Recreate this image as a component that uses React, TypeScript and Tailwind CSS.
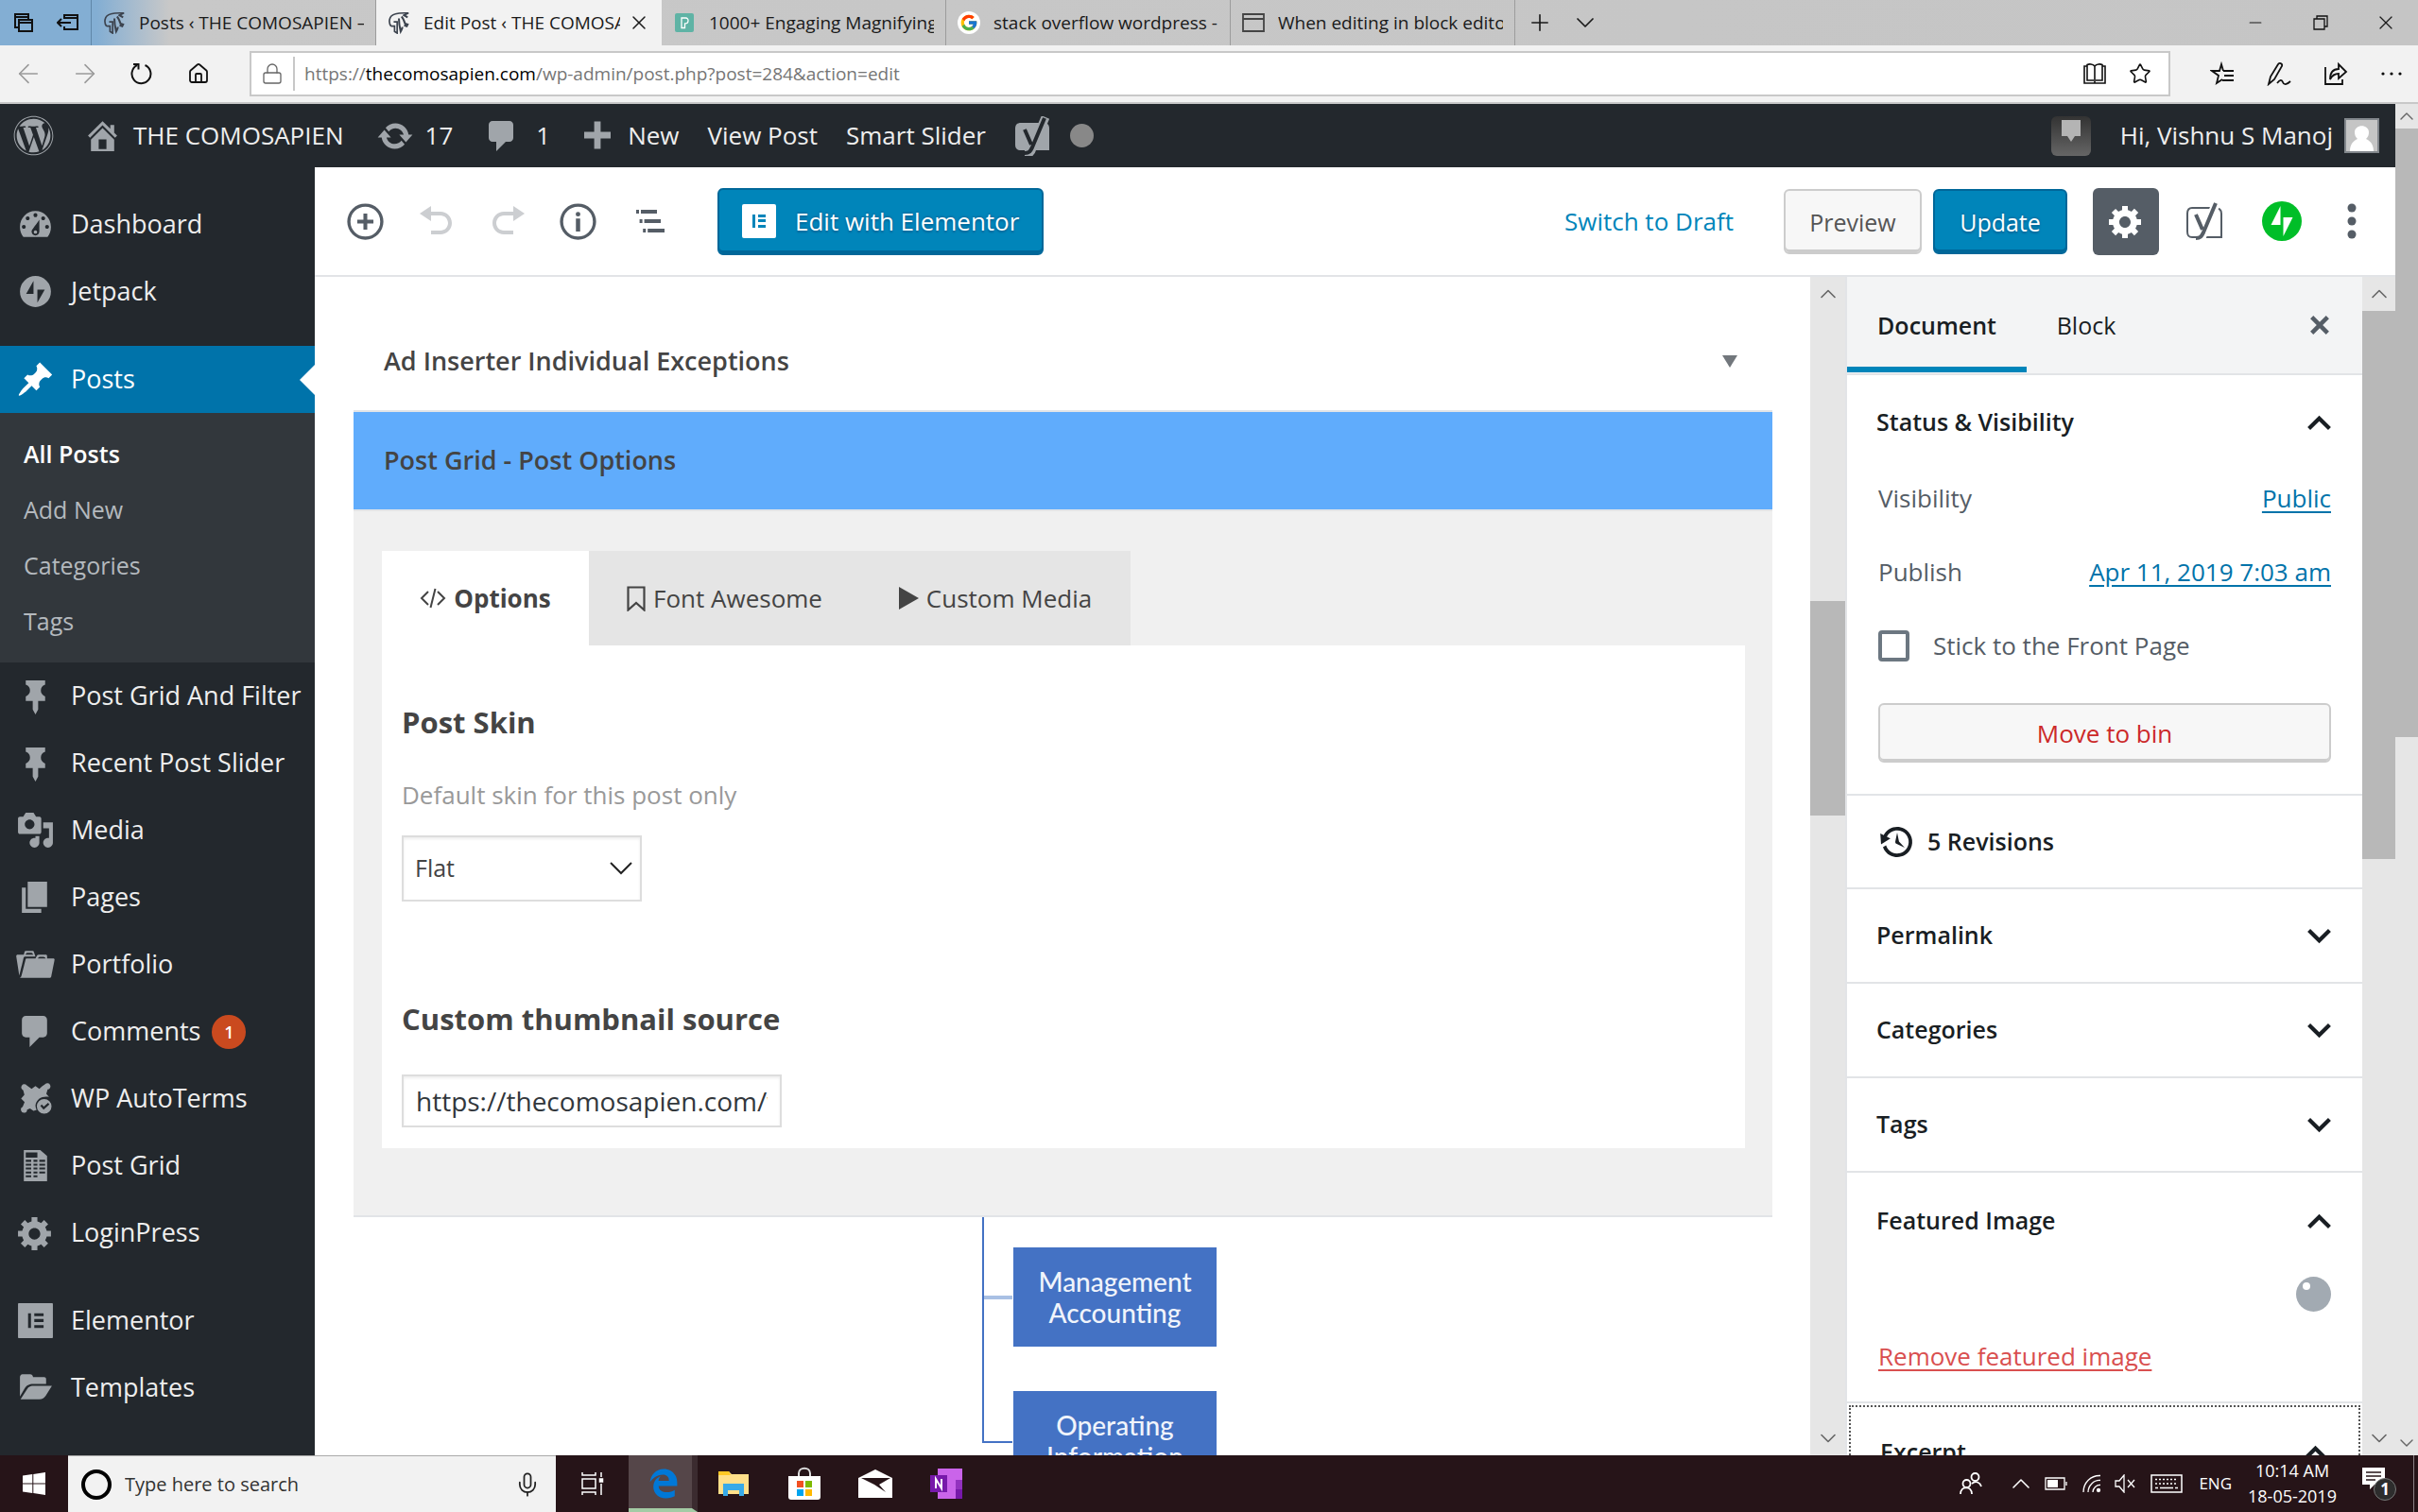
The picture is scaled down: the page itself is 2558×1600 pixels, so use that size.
import React from "react";
import {
  ArrowLeft,
  ArrowRight,
  ChevronDown,
  ChevronUp,
  House,
  Lock,
  Mic,
  Minus,
  Plus,
  Star,
  X,
} from "lucide-react";
import { FaWordpress, FaEdgeLegacy } from "react-icons/fa";
import { FcGoogle } from "react-icons/fc";

const paths = {
  post: "M10.44 3.02l1.82-1.82 6.36 6.35-1.83 1.82c-1.05-.68-2.48-.57-3.41.36l-.75.75c-.92.93-1.04 2.35-.35 3.41l-1.83 1.82-2.41-2.41-2.8 2.79c-.42.42-3.38 2.71-3.8 2.29s1.86-3.39 2.28-3.81l2.79-2.79L4.1 9.36l1.83-1.82c1.05.69 2.48.57 3.4-.36l.75-.75c.93-.92 1.05-2.35.36-3.41z",
  home: "M16 8.5l1.53 1.53-1.06 1.06L10 4.6l-6.47 6.49-1.06-1.06L10 2.5l4 4v-2h2v4zm-6-2.46l6 5.99V18H4v-5.97zM12 17v-5H8v5h4z",
  update:
    "M10.2 3.28c3.53 0 6.43 2.61 6.92 6h2.08l-3.5 4-3.5-4h2.32c-.45-1.97-2.21-3.45-4.32-3.45-1.45 0-2.73.71-3.54 1.78L4.95 5.66C6.23 4.2 8.11 3.28 10.2 3.28zm-.4 13.44c-3.52 0-6.43-2.61-6.92-6H.8l3.5-4c1.17 1.33 2.33 2.67 3.5 4H5.48c.45 1.97 2.21 3.45 4.32 3.45 1.45 0 2.73-.71 3.54-1.78l1.71 1.95c-1.28 1.46-3.15 2.38-5.25 2.38z",
  comments:
    "M5 2h9c1.1 0 2 .9 2 2v7c0 1.1-.9 2-2 2h-2l-5 5v-5H5c-1.1 0-2-.9-2-2V4c0-1.1.9-2 2-2z",
  plus: "M17 7.8v3.4h-5.3V16.800H8.300V11.200H3V7.800h5.300V2.200h3.400v5.600z",
  dashboard:
    "M3.76 16.5h12.48C17.350 15 18 13.300 18 11.300 18 6.600 14.420 3 10 3s-8 3.600-8 8.300c0 2 .65 3.700 1.760 5.200zM10 4.200c.6 0 1 .4 1 1s-.4 1-1 1-1-.4-1-1 .4-1 1-1zM6 5.800c.6 0 1 .4 1 1s-.4 1-1 1-1-.4-1-1 .4-1 1-1zm8 0c.6 0 1 .4 1 1s-.4 1-1 1-1-.4-1-1 .4-1 1-1zM12 7.500v6.200c0 1.100-.9 2-2 2s-2-.9-2-2 1.500-2.400 4-6.200zM4 10.200c.6 0 1 .4 1 1s-.4 1-1 1-1-.4-1-1 .4-1 1-1zm12 0c.6 0 1 .4 1 1s-.4 1-1 1-1-.4-1-1 .4-1 1-1zM10 13a.9.9 0 1 0 0 1.800.9.9 0 1 0 0-1.800z",
  jetpack:
    "M10 2a8 8 0 1 0 0 16 8 8 0 1 0 0-16zM9 4.500V11.200H5.200zM11 9h3.800L11 15.700z",
  pin: "M5 2h10v2.200c-1.600.6-2.200 1.600-2.200 3s.7 2.300 2.200 3V12.500h-3.600v4.500L10 19.500 8.600 17v-4.500H5v-2.300c1.500-.7 2.200-1.600 2.200-3S6.600 4.800 5 4.200z",
  media:
    "M13 11V4c0-.55-.45-1-1-1h-1.670L9 1H5L3.670 3H2c-.55 0-1 .45-1 1v7c0 .55.45 1 1 1h10c.55 0 1-.45 1-1zM7 4.500c1.380 0 2.500 1.120 2.500 2.500S8.380 9.500 7 9.500 4.500 8.380 4.500 7 5.620 4.500 7 4.500zM14 6h5v10.500c0 1.380-1.120 2.500-2.500 2.500S14 17.880 14 16.500s1.120-2.500 2.500-2.500c.17 0 .34.02.5.05V9h-3V6zm-4 8.050V13h2v3.500c0 1.380-1.120 2.500-2.500 2.500S7 17.880 7 16.500 8.120 14 9.500 14c.17 0 .34.02.5.05z",
  page: "M6 15V2h10v13H6zm-1 1h8v2H3V5h2v11z",
  portfolio:
    "M4 5H.78c-.37 0-.74.32-.69.84l1.560 9.990S3.500 8.470 3.860 6.700c.11-.53.61-.7.98-.7H10s-.7-2.080-.77-2.310C9.110 3.250 8.890 3 8.450 3H5.140c-.36 0-.7.23-.8.64C4.250 4.040 4 5 4 5zm4.880 0h-4s.42-1 .87-1h2.130c.48 0 1 1 1 1zM2.670 16.250c-.31.47-.76.75-1.260.75h15.730c.54 0 .92-.31 1.030-.83.44-2.190 1.680-8.440 1.680-8.440.07-.5-.3-.73-.62-.73H16V5.530c0-.16-.26-.53-.66-.53h-3.760c-.52 0-.87.58-.87.58L10 7H5.590c-.32 0-.63.19-.69.5 0 0-1.590 6.700-2.230 8.750zM15.340 7H11.300s.34-.85.94-.85h1.900c.6 0 1.200.85 1.200.85z",
  autoterms:
    "M10 3.500l2 1.500 1.300-1.200L15 2.600a1.600 1.600 0 1 1 1.300 2.700L15.600 7.500 17 9.200c-3.500-.6-6.500 1-7 4.300.1 1 .3 1.700.6 2.400L9 16.300l-1.800-1.200-1.500.6a1.600 1.600 0 1 1-2.300-1.400l1-2.500L2.600 10l1.700-2-.6-2.300A1.600 1.600 0 1 1 5.500 3.200L8 5zM14.500 10.200a3.800 3.800 0 1 1 0 7.600 3.800 3.800 0 0 1 0-7.600zm-2 3.600l1.700 1.900 3-2.700-.7-.8-2.200 2-1-1.100z",
  sheet:
    "M4 2h8.500L16 5v13H4zM5 3.200v2.600h6V3.200zM5 7v1h2.800V7zm4 0v1h2V7zm3 0v1h3V7zM5 9v1h2.800V9zm4 0v1h2V9zm3 0v1h3V9zM5 11v1h2.800v-1zm4 0v1h2v-1zm3 0v1h3v-1zM5 13v1h2.800v-1zm4 0v1h2v-1zm3 0v1h3v-1zM5 15v1h2.800v-1zm4 0v1h2v-1z",
  gear: "M18 12h-2.180c-.17.7-.44 1.350-.81 1.930l1.540 1.540-2.100 2.100-1.540-1.540c-.58.36-1.230.63-1.910.79V19H8v-2.180c-.68-.16-1.330-.43-1.910-.79l-1.540 1.540-2.120-2.120 1.540-1.540c-.36-.58-.63-1.230-.79-1.910H1V9.030h2.170c.16-.7.44-1.350.8-1.940L2.430 5.550l2.100-2.100 1.540 1.540c.58-.37 1.240-.64 1.930-.81V2h3v2.180c.68.16 1.330.43 1.910.79l1.540-1.540 2.120 2.120-1.540 1.540c.36.59.64 1.240.8 1.940H18V12zm-8.500 1.500c1.660 0 3-1.340 3-3s-1.340-3-3-3-3 1.340-3 3 1.340 3 3 3z",
  elementor:
    "M1.500 1h17c.3 0 .5.2.5.5v17c0 .3-.2.5-.5.5h-17c-.3 0-.5-.2-.5-.5v-17c0-.3.2-.5.5-.5zM6.200 6.200v7.600h1.500V6.200zM9.400 6.200v1.500h4.800V6.200zm0 3v1.500h4.800V9.200zm0 3.100v1.500h4.800v-1.500z",
  folder:
    "M2 14.500V4.500c0-.8.5-1.500 1.300-1.500h4c.8 0 1.300.5 1.500 1.500h5.700c.6 0 1 .4 1 1V8H9C6.500 8 5.500 8.700 4.500 10.300zM2.300 16L5.300 11.300C6.200 9.800 7 9 9 9h9.500l-3.200 5.200C14.500 15.400 13.600 16 12 16z",
  backup:
    "M13.650 2.880c3.930 2.010 5.480 6.840 3.470 10.770s-6.830 5.480-10.770 3.470c-1.870-.96-3.200-2.560-3.860-4.400l1.640-1.030c.45 1.570 1.520 2.950 3.080 3.760 3.010 1.540 6.690.35 8.230-2.660 1.550-3.010.36-6.690-2.650-8.240C9.780 3.010 6.100 4.200 4.560 7.210l1.880.97-4.950 3.080-.39-5.820 1.780.91C4.900 2.400 9.750.89 13.650 2.880zm-4.360 7.830C9.110 10.530 9 10.280 9 10c0-.07.03-.12.04-.19h-.01L10 5l.97 4.810L14 13l-4.500-2.120.02-.02c-.08-.04-.16-.09-.23-.15z",
  insert:
    "M10 1.500a8.500 8.500 0 1 0 0 17 8.500 8.500 0 1 0 0-17zM10 3a7 7 0 1 1 0 14 7 7 0 1 1 0-14zM9.100 6.200v2.900H6.200v1.800h2.900v2.900h1.800v-2.900h2.900V9.100h-2.900V6.200z",
  undo: "M12 5H7V2L1 6l6 4V7h5c2.200 0 4 1.800 4 4s-1.800 4-4 4H7v2h5c3.300 0 6-2.700 6-6s-2.700-6-6-6",
  redo: "M8 5h5V2l6 4-6 4V7H8c-2.200 0-4 1.800-4 4s1.800 4 4 4h5v2H8c-3.300 0-6-2.700-6-6s2.700-6 6-6",
  info: "M10 1.500a8.500 8.500 0 1 0 0 17 8.500 8.500 0 1 0 0-17zM10 3a7 7 0 1 1 0 14 7 7 0 1 1 0-14zM9 8.500v6.200h2V8.500zM10 5.400a1.100 1.100 0 1 0 0 2.200 1.100 1.100 0 1 0 0-2.200z",
  outline:
    "M3 4h1.500v2H3zM5.500 4H14v2H5.500zM4.800 9h1.500v2H4.800zM7.300 9H16v2H7.300zM6.600 14h1.500v2H6.600zM9.100 14H18v2H9.100z",
  up: "M3.900 14.900L2 12.900 10 5l8 7.900-1.900 2L10 8.900z",
  down: "M3.900 5.100L2 7.100 10 15l8-7.900-1.900-2L10 11.100z",
  close: "M3.800 5.800L5.800 3.800 10 8l4.200-4.200 2 2L12 10l4.200 4.200-2 2L10 12l-4.200 4.200-2-2L8 10z",
};

type Glyph = keyof typeof paths;

function Dash({ name, className = "size-10" }: { name: Glyph; className?: string }) {
  return (
    <svg viewBox="0 0 20 20" className={`${className} shrink-0`} fill="currentColor" fillRule="evenodd" aria-hidden="true">
      <path d={paths[name]} />
    </svg>
  );
}

function Spartan() {
  return (
    <svg viewBox="0 0 26 26" className="size-6 shrink-0" fill="none" stroke="#3c434e" strokeWidth="1.800" aria-hidden="true">
      <path d="M4 17C1 13 1 5 9 3c5-1.500 10-1 15-1l-6 3M4 17h4v6l3 2V12H7" />
      <path d="M13 8c0 6 1 11 2 15 1-2 2-3 2-5M16 6c2 2 3 5 4 8l3 1-1 2-3-1M18 4l5 3" strokeWidth="2.200" />
    </svg>
  );
}

function TabStackIcon() {
  return (
    <svg viewBox="0 0 22 22" className="size-[22px]" fill="none" stroke="#111" strokeWidth="2" aria-hidden="true">
      <path d="M6 16H2V2h14v5M2 5h14M6 8h14v12H6zM6 11h14" />
    </svg>
  );
}

function SetAsideIcon() {
  return (
    <svg viewBox="0 0 24 20" className="h-5 w-6" fill="none" stroke="#111" strokeWidth="2" aria-hidden="true">
      <path d="M8 6V2h14v15H8v-3M8 5h14M1 10h14M5 6l-4 4 4 4" />
    </svg>
  );
}

function ReloadIcon() {
  return (
    <svg viewBox="0 0 24 24" className="size-6" fill="none" stroke="#111" strokeWidth="2" aria-hidden="true">
      <path d="M15.500 3A10 10 0 1 1 7 3.200M3 2h5.500v5.500" />
    </svg>
  );
}

function ReadingIcon() {
  return (
    <svg viewBox="0 0 24 22" className="h-[22px] w-6" fill="none" stroke="#111" strokeWidth="1.600" aria-hidden="true">
      <path d="M4 3H1v18h22V3h-3M12 3v18M12 3c-2-2.500-6-2.500-8-1.500V18h7M12 3c2-2.500 6-2.500 8-1.500V18h-7" />
    </svg>
  );
}

function HubIcon() {
  return (
    <svg viewBox="0 0 26 26" className="size-[26px]" fill="none" stroke="#111" strokeWidth="1.800" aria-hidden="true">
      <path d="M14 10h11M15 15h10M13 20h12M13 19l-6 4 2-8-7-5h8l2-7 2 7" />
    </svg>
  );
}

function PenIcon() {
  return (
    <svg viewBox="0 0 26 26" className="size-[26px]" fill="none" stroke="#111" strokeWidth="1.800" aria-hidden="true">
      <path d="M2 24l2-8L12 3c1-2 5-1 4 2L8 19zM11 23c3-4 5-4 6-1s4 3 8-1" />
    </svg>
  );
}

function ShareIcon() {
  return (
    <svg viewBox="0 0 26 26" className="size-[26px]" fill="none" stroke="#111" strokeWidth="1.800" aria-hidden="true">
      <path d="M2 6v18h18v-5M7 19c0-7 3-11 9-11V3l8 8-8 7v-5c-4 0-7 2-9 6z" />
    </svg>
  );
}

function YoastIcon({ solid }: { solid?: boolean }) {
  return (
    <svg viewBox="0 0 40 42" className="h-[42px] w-10 shrink-0" aria-hidden="true">
      {solid ? (
        <path d="M7 7h24c4 0 6 2 6 6v23H7c-4 0-6-2-6-6V13c0-4 2-6 6-6z" fill="#a0a5aa" />
      ) : (
        <path d="M7 7h24c4 0 7 2 7 6v25H7c-4 0-5-2-5-6V13c0-4 1-6 5-6z" fill="#fff" stroke="#555d66" strokeWidth="2" />
      )}
      <path d="M10 14l8 18M33 1L19 34c-1 4-3 6-8 6" fill="none" stroke={solid ? "#a0a5aa" : "#fff"} strokeWidth="9" />
      <path d="M11 14l7 16M32 2L19 33c-2 4-3 6-8 6" fill="none" stroke={solid ? "#23282d" : "#555d66"} strokeWidth="4" />
    </svg>
  );
}

function IconButton({ label, children, className = "" }: { label: string; children: React.ReactNode; className?: string }) {
  return (
    <button type="button" aria-label={label} className={`flex shrink-0 items-center justify-center ${className}`}>
      {children}
    </button>
  );
}

/* Browser chrome */

function BrowserTab({ icon, title, active }: { icon: React.ReactNode; title: string; active?: boolean }) {
  return (
    <div
      className={
        active
          ? "flex w-[302px] items-center bg-[#f2f2f2] pr-3 pl-3"
          : "flex w-[301px] items-center border-r border-[#9c9c9c] pr-3 pl-3"
      }
    >
      <button type="button" role="tab" aria-selected={!!active} className="flex min-w-0 flex-1 items-center gap-3.5">
        <span className="flex w-6 shrink-0 justify-center">{icon}</span>
        <span className="flex-1 overflow-hidden text-left whitespace-nowrap">{title}</span>
      </button>
      {active && (
        <IconButton label="Close tab" className="ml-2 w-6">
          <X className="size-6" strokeWidth={1.5} />
        </IconButton>
      )}
    </div>
  );
}

function TabStrip() {
  return (
    <div className="flex h-12 shrink-0 items-stretch bg-linear-to-r from-[#83aed3] from-4% via-[#c8c8c8] via-7% to-[#c5c5c5] text-[19px] text-[#1a1a1a]">
      <div className="flex w-[97px] items-center justify-between border-r border-[#5f87a8] pr-3 pl-3.5">
        <IconButton label="Tabs you've set aside"><TabStackIcon /></IconButton>
        <IconButton label="Set these tabs aside"><SetAsideIcon /></IconButton>
      </div>
      <div role="tablist" className="flex">
        <BrowserTab icon={<Spartan />} title="Posts ‹ THE COMOSAPIEN –" />
        <BrowserTab icon={<Spartan />} title="Edit Post ‹ THE COMOSA" active />
        <BrowserTab
          icon={
            <svg viewBox="0 0 20 20" className="size-5" aria-hidden="true">
              <rect width="20" height="20" rx="2" fill="#5fb3a5" />
              <path d="M7 15.500V5h4.500a2.500 2.500 0 0 1 2.500 2.800c0 2-1.200 3.200-3.500 3.200v4.500z" fill="none" stroke="#fff" strokeWidth="1.300" />
            </svg>
          }
          title="1000+ Engaging Magnifying"
        />
        <BrowserTab
          icon={<span className="flex size-6 items-center justify-center rounded-full bg-white"><FcGoogle className="size-5" /></span>}
          title="stack overflow wordpress -"
        />
        <BrowserTab
          icon={
            <svg viewBox="0 0 24 20" className="h-5 w-6" fill="none" stroke="#444" strokeWidth="1.800" aria-hidden="true">
              <path d="M1 1h22v18H1zM1 6h22" />
            </svg>
          }
          title="When editing in block edito"
        />
      </div>
      <IconButton label="New tab" className="w-[52px]"><Plus className="size-7" strokeWidth={1.400} /></IconButton>
      <IconButton label="Tab previews" className="w-11"><ChevronDown className="size-8" strokeWidth={1.300} /></IconButton>
      <div className="ml-auto flex">
        <IconButton label="Minimise" className="w-[69px]"><Minus className="size-5" strokeWidth={1.400} /></IconButton>
        <IconButton label="Restore" className="w-[69px]">
          <svg viewBox="0 0 16 16" className="size-4" fill="none" stroke="#111" strokeWidth="1.300" aria-hidden="true">
            <path d="M4 4V1h11v11h-3M1 4h11v11H1z" />
          </svg>
        </IconButton>
        <IconButton label="Close" className="w-[69px]"><X className="size-6" strokeWidth={1.200} /></IconButton>
      </div>
    </div>
  );
}

function AddressBar() {
  return (
    <div className="flex h-[62px] shrink-0 items-center border-b-2 border-[#c8c8c8] bg-[#f2f2f2] text-[#111]">
      <IconButton label="Back" className="w-[60px] text-[#9a9a9a]"><ArrowLeft className="size-8" strokeWidth={1.200} /></IconButton>
      <IconButton label="Forward" className="w-[60px] text-[#9a9a9a]"><ArrowRight className="size-8" strokeWidth={1.200} /></IconButton>
      <IconButton label="Refresh" className="w-[60px]"><ReloadIcon /></IconButton>
      <IconButton label="Home" className="w-[60px]"><House className="size-6" strokeWidth={1.800} /></IconButton>
      <div className="ml-6 flex h-12 flex-1 items-center border-2 border-[#c8c8c8] bg-white">
        <Lock className="ml-2.5 size-6 shrink-0 text-[#666]" strokeWidth={1.300} />
        <div className="mx-2.5 h-9 w-0.5 bg-[#c8c8c8]" />
        <div role="textbox" aria-label="Address" contentEditable suppressContentEditableWarning className="flex-1 overflow-hidden text-[19px] whitespace-nowrap text-[#767676] outline-none">
          https://<span className="text-black">thecomosapien.com</span>/wp-admin/post.php?post=284&amp;action=edit
        </div>
        <IconButton label="Reading view" className="w-12"><ReadingIcon /></IconButton>
        <IconButton label="Add to favourites" className="mr-1.5 w-12"><Star className="size-6" strokeWidth={1.600} /></IconButton>
      </div>
      <div className="ml-[25px] flex">
        <IconButton label="Hub" className="w-[60px]"><HubIcon /></IconButton>
        <IconButton label="Add notes" className="w-[60px]"><PenIcon /></IconButton>
        <IconButton label="Share" className="w-[60px]"><ShareIcon /></IconButton>
        <IconButton label="More" className="w-[57px]">
          <svg viewBox="0 0 22 4" className="h-1 w-[22px]" aria-hidden="true">
            <circle cx="2" cy="2" r="1.600" /><circle cx="11" cy="2" r="1.600" /><circle cx="20" cy="2" r="1.600" />
          </svg>
        </IconButton>
      </div>
    </div>
  );
}

/* WordPress */

function AdminBar() {
  return (
    <div className="flex h-[67px] shrink-0 items-center bg-[#23282d] pl-3.5 text-[26px] text-[#eee]">
      <a href="#wp" aria-label="About WordPress"><FaWordpress className="size-[43px] text-[#a0a5aa]" /></a>
      <a href="#site" className="ml-[31px] flex items-center gap-3"><Dash name="home" className="size-[41px] text-[#a0a5aa]" />THE COMOSAPIEN</a>
      <a href="#updates" className="ml-[34px] flex items-center gap-3"><Dash name="update" className="size-10 text-[#a0a5aa]" />17</a>
      <a href="#comments" className="ml-8 flex items-center gap-4"><Dash name="comments" className="size-10 text-[#a0a5aa]" />1</a>
      <a href="#new" className="ml-[30px] flex items-center gap-3"><Dash name="plus" className="size-10 text-[#a0a5aa]" />New</a>
      <a href="#view" className="ml-[30px]">View Post</a>
      <a href="#slider" className="ml-[30px]">Smart Slider</a>
      <a href="#seo" aria-label="SEO" className="ml-[30px] flex items-center gap-[19px]">
        <YoastIcon solid />
        <span className="size-[25px] rounded-full bg-[#888]" />
      </a>
      <a href="#notes" aria-label="Notifications" className="ml-auto flex h-[42px] w-[42px] justify-center rounded-md bg-linear-to-b from-[#333] to-[#666] pt-1">
        <svg viewBox="0 0 22 24" className="h-6 w-[22px]" fill="#b4b4b4" aria-hidden="true">
          <path d="M1 0h20v17h-6l-4 6-4-6H1z" />
        </svg>
      </a>
      <a href="#profile" className="ml-[31px] flex items-center gap-3">
        Hi, Vishnu S Manoj
        <svg viewBox="0 0 37 37" className="mr-[17px] size-[37px]" aria-hidden="true">
          <rect width="37" height="37" fill="#82878c" />
          <rect x="2" y="2" width="33" height="33" fill="#c5c5c5" />
          <path d="M6 35c0-8 4-11 8-13-2-2-3-4-3-7 0-9 15-9 15 0 0 3-1 5-3 7 4 2 8 5 8 13z" fill="#fff" />
        </svg>
      </a>
    </div>
  );
}

function MenuItem({ icon, label, badge, current }: { icon: Glyph; label: string; badge?: string; current?: boolean }) {
  return (
    <a
      href={`#${label}`}
      className={
        current
          ? "relative flex h-[71px] items-center bg-[#0073aa] pl-[17px] text-white"
          : "flex h-[71px] items-center pl-[17px] text-[#eee]"
      }
    >
      <span className={current ? "" : "text-[#a0a5aa]"}><Dash name={icon} className="size-[41px]" /></span>
      <span className="ml-[17px] whitespace-nowrap">{label}</span>
      {badge && (
        <span className="ml-3 flex size-9 items-center justify-center rounded-full bg-[#ca4a1f] text-lg font-semibold text-white">{badge}</span>
      )}
      {current && (
        <svg viewBox="0 0 16 32" className="absolute right-0 h-8 w-4" aria-hidden="true"><path d="M16 0v32L0 16z" fill="#fff" /></svg>
      )}
    </a>
  );
}

function AdminMenu() {
  const sub = ["Add New", "Categories", "Tags"];
  return (
    <nav aria-label="Admin menu" className="w-[333px] shrink-0 overflow-hidden bg-[#23282d] pt-[25px] text-[27px]">
      <MenuItem icon="dashboard" label="Dashboard" />
      <MenuItem icon="jetpack" label="Jetpack" />
      <div className="h-[22px]" />
      <MenuItem icon="post" label="Posts" current />
      <div className="flex flex-col bg-[#32373c] px-[25px] py-3.5 text-[25px] text-[#b4b9be]">
        <a href="#all" className="h-[59px] leading-[59px] font-semibold text-white">All Posts</a>
        {sub.map((s) => (
          <a key={s} href={`#${s}`} className="h-[59px] leading-[59px]">{s}</a>
        ))}
      </div>
      <MenuItem icon="pin" label="Post Grid And Filter" />
      <MenuItem icon="pin" label="Recent Post Slider" />
      <MenuItem icon="media" label="Media" />
      <MenuItem icon="page" label="Pages" />
      <MenuItem icon="portfolio" label="Portfolio" />
      <MenuItem icon="comments" label="Comments" badge="1" />
      <MenuItem icon="autoterms" label="WP AutoTerms" />
      <MenuItem icon="sheet" label="Post Grid" />
      <MenuItem icon="gear" label="LoginPress" />
      <div className="h-[22px]" />
      <MenuItem icon="elementor" label="Elementor" />
      <MenuItem icon="folder" label="Templates" />
    </nav>
  );
}

function EditorHeader() {
  return (
    <header className="flex h-[116px] shrink-0 items-center border-b-2 border-[#e2e4e7] bg-white pl-4 text-[#555d66]">
      <IconButton label="Add block" className="w-[75px]"><Dash name="insert" className="size-[45px]" /></IconButton>
      <IconButton label="Undo" className="w-[75px] text-[#ccced1]"><Dash name="undo" className="size-10" /></IconButton>
      <IconButton label="Redo" className="w-[75px] text-[#ccced1]"><Dash name="redo" className="size-10" /></IconButton>
      <IconButton label="Content structure" className="w-[75px]"><Dash name="info" className="size-[45px]" /></IconButton>
      <IconButton label="Block navigation" className="w-[75px]"><Dash name="outline" className="size-10" /></IconButton>
      <button
        type="button"
        className="ml-[35px] flex h-[71px] items-center gap-5 rounded-md border-2 border-[#006799] bg-[#0085ba] px-6 text-[26px] text-white shadow-[inset_0_-3px_0_#006799] [text-shadow:0_-1px_2px_#006799,0_2px_2px_#006799]"
      >
        <svg viewBox="0 0 36 36" className="size-9" aria-hidden="true">
          <rect width="36" height="36" rx="2" fill="#fff" />
          <path d="M11 11h3v14h-3zM17 11h8v3h-8zM17 16h8v3h-8zM17 22h8v3h-8z" fill="#0085ba" />
        </svg>
        Edit with Elementor
      </button>
      <button type="button" className="ml-auto text-[26px] text-[#0085ba]">Switch to Draft</button>
      <button type="button" className="ml-[53px] h-[69px] w-[146px] rounded-md border-2 border-[#ccc] bg-[#f7f7f7] pt-1 text-[25px] text-[#555] shadow-[inset_0_-3px_0_#ccc]">
        Preview
      </button>
      <button
        type="button"
        className="ml-3 h-[69px] w-[142px] rounded-md border-2 border-[#006799] bg-[#0085ba] pt-1 text-[25px] text-white shadow-[inset_0_-3px_0_#006799] [text-shadow:0_-1px_2px_#006799,0_2px_2px_#006799]"
      >
        Update
      </button>
      <IconButton label="Settings" className="ml-[27px] h-[71px] w-[70px] rounded-md bg-[#555d66] text-white"><Dash name="gear" /></IconButton>
      <IconButton label="Yoast SEO" className="ml-[13px] w-[70px]"><YoastIcon /></IconButton>
      <IconButton label="Jetpack" className="ml-3 w-[70px]">
        <svg viewBox="0 0 42 42" className="size-[42px]" aria-hidden="true">
          <circle cx="21" cy="21" r="21" fill="#00be28" />
          <path d="M19.500 5v20H9.500zM22.500 17h10l-10 20z" fill="#fff" />
        </svg>
      </IconButton>
      <IconButton label="More tools" className="mr-[11px] ml-1 w-[70px]">
        <svg viewBox="0 0 10 38" className="h-[38px] w-2.5" fill="#555d66" aria-hidden="true">
          <circle cx="5" cy="5" r="4.500" /><circle cx="5" cy="19" r="4.500" /><circle cx="5" cy="33" r="4.500" />
        </svg>
      </IconButton>
    </header>
  );
}

function ScrollBar({ width, arrow, before, thumb }: { width: string; arrow: string; before: string; thumb: string }) {
  return (
    <div className={`flex shrink-0 flex-col items-center bg-[#e6e6e6] text-[#666] ${width}`}>
      <ChevronUp className={`shrink-0 ${arrow}`} strokeWidth={1.400} />
      <div className={`shrink-0 ${before}`} />
      <div className={`w-full shrink-0 bg-[#b8b8b8] ${thumb}`} />
      <div className="flex-1" />
      <ChevronDown className={`shrink-0 ${arrow}`} strokeWidth={1.400} />
    </div>
  );
}

function MetaBoxes() {
  return (
    <div className="mr-10 ml-[41px] pt-[38px] text-[#444]">
      <button type="button" className="flex h-[105px] w-full items-center justify-between border-b-2 border-[#e2e4e7] pr-[37px] pl-8 text-[27px] font-semibold">
        Ad Inserter Individual Exceptions
        <svg viewBox="0 0 16 13" className="h-[13px] w-4" aria-hidden="true"><path d="M0 0h16L8 13z" fill="#72777c" /></svg>
      </button>
      <button type="button" className="flex h-[105px] w-full items-center border-b-2 border-[#e2e4e7] bg-[#60acfc] px-8 text-[27px] font-semibold">
        Post Grid - Post Options
      </button>
      <div className="border-b-2 border-[#e2e4e7] bg-[#f0f0f0] pt-[42px] pr-[29px] pb-[71px] pl-[30px]">
        <div role="tablist" className="flex h-[100px] text-[26px]">
          <button type="button" role="tab" aria-selected="true" className="flex w-[219px] items-center justify-center gap-2 bg-white font-bold">
            <svg viewBox="0 0 28 22" className="h-[22px] w-7" fill="none" stroke="#444" strokeWidth="2" aria-hidden="true">
              <path d="M9 4L2 11l7 7M19 4l7 7-7 7M16.500 1l-5 20" />
            </svg>
            Options
          </button>
          <button type="button" role="tab" aria-selected="false" className="flex w-[287px] items-center justify-center gap-2 bg-[#e5e5e5]">
            <svg viewBox="0 0 20 27" className="h-[27px] w-5" fill="none" stroke="#444" strokeWidth="2.200" aria-hidden="true">
              <path d="M1.500 1.500h17v24L10 18l-8.500 7.500z" />
            </svg>
            Font Awesome
          </button>
          <button type="button" role="tab" aria-selected="false" className="flex w-[286px] items-center justify-center gap-2 bg-[#e5e5e5]">
            <svg viewBox="0 0 21 24" className="h-6 w-[21px]" fill="#444" aria-hidden="true"><path d="M0 0l21 12L0 24z" /></svg>
            Custom Media
          </button>
        </div>
        <div className="flex flex-col items-start bg-white px-[21px] pt-[57px] pb-[22px]">
          <h3 className="text-[31px] leading-12 font-bold">Post Skin</h3>
          <label htmlFor="skin" className="mt-[33px] text-[26px] leading-10 text-[#999]">Default skin for this post only</label>
          <div className="relative mt-[23px]">
            <select id="skin" defaultValue="Flat" className="h-[70px] w-[254px] appearance-none border-2 border-[#ddd] bg-white px-3 text-[25px] text-[#444] shadow-[inset_0_2px_3px_#eee]">
              <option>Flat</option>
            </select>
            <svg viewBox="0 0 24 14" className="pointer-events-none absolute top-7 right-2.5 h-3.5 w-6" fill="none" stroke="#222" strokeWidth="2" aria-hidden="true">
              <path d="M1 1l11 11L23 1" />
            </svg>
          </div>
          <h3 className="mt-[100px] text-[31px] leading-12 font-bold">
            <label htmlFor="thumb">Custom thumbnail source</label>
          </h3>
          <input
            id="thumb"
            type="text"
            defaultValue="https://thecomosapien.com/wp-content/uploads"
            className="mt-[35px] h-14 w-[402px] border-2 border-[#ddd] bg-white px-[13px] text-[28px] text-[#32373c] shadow-[inset_0_2px_3px_#eee]"
          />
        </div>
      </div>
    </div>
  );
}

function OrgChart() {
  return (
    <div className="flex pl-[704px]">
      <svg viewBox="0 0 34 240" className="h-60 w-[34px] shrink-0" fill="none" aria-hidden="true">
        <path d="M4 85h30" stroke="#a9c0e4" strokeWidth="4" />
        <path d="M3 0v238h31" stroke="#4472c4" strokeWidth="2" />
      </svg>
      <div className="flex flex-col gap-[47px] pt-8 pl-px text-center font-['Lato'] text-[28px] leading-[33px] font-medium text-[#f0f4fb]">
        <div className="flex h-[105px] w-[215px] items-center justify-center bg-[#4472c4]">Management<br />Accounting</div>
        <div className="flex h-[105px] w-[215px] items-center justify-center bg-[#4472c4]">Operating<br />Information</div>
      </div>
    </div>
  );
}

function PanelTitle({ label, open, height = "h-[100px]" }: { label: string; open?: boolean; height?: string }) {
  return (
    <button type="button" aria-expanded={!!open} className={`flex w-full items-center justify-between pr-[30px] pl-[31px] text-[25px] font-semibold text-[#191e23] ${height}`}>
      {label}
      <Dash name={open ? "up" : "down"} className="size-[31px]" />
    </button>
  );
}

function SettingsSidebar() {
  return (
    <aside className="flex min-w-0 flex-1 flex-col overflow-hidden border-l-2 border-[#e2e4e7] bg-white text-[26px] text-[#555d66]">
      <div className="flex h-[104px] shrink-0 items-stretch border-b-2 border-[#e2e4e7] bg-[#f3f4f5] text-[25px] text-[#191e23]">
        <button type="button" className="h-[101px] w-[190px] border-b-[6px] border-[#0085ba] pt-2 text-center font-semibold">Document</button>
        <button type="button" className="h-[101px] w-[126px] border-b-[6px] border-transparent pt-2">Block</button>
        <IconButton label="Close settings" className="mr-[25px] ml-auto w-10 text-[#555d66]"><Dash name="close" className="size-8" /></IconButton>
      </div>
      <section className="h-[445px] shrink-0 border-b-2 border-[#e2e4e7]">
        <PanelTitle label="Status & Visibility" open />
        <div className="flex flex-col px-[33px]">
          <div className="flex h-[60px] items-center justify-between">Visibility <button type="button" className="text-[#0073aa] underline underline-offset-4">Public</button></div>
          <div className="mt-[18px] flex h-[60px] items-center justify-between">Publish <button type="button" className="text-[#0073aa] underline underline-offset-4">Apr 11, 2019 7:03 am</button></div>
          <label className="mt-[18px] flex h-[60px] items-center gap-[25px]">
            <input type="checkbox" className="size-[33px] appearance-none rounded-sm border-4 border-[#6c7781] bg-white" />
            Stick to the Front Page
          </label>
          <button type="button" className="mt-[31px] h-[63px] rounded-md border-2 border-[#ccc] bg-[#f7f7f7] pt-0.5 text-[#cc2929] shadow-[inset_0_-2px_0_#ccc]">Move to bin</button>
        </div>
      </section>
      <button type="button" className="flex h-[99px] shrink-0 items-center gap-3 border-b-2 border-[#e2e4e7] pl-[33px] text-[25px] font-semibold text-[#191e23]">
        <Dash name="backup" className="size-10" />
        5 Revisions
      </button>
      {["Permalink", "Categories", "Tags"].map((t) => (
        <section key={t} className="shrink-0 border-b-2 border-[#e2e4e7]"><PanelTitle label={t} height="h-[98px]" /></section>
      ))}
      <section className="h-[244px] shrink-0 border-b-2 border-[#e2e4e7]">
        <PanelTitle label="Featured Image" open height="h-[102px]" />
        <div className="flex flex-col items-start px-[33px]">
          <svg viewBox="0 0 37 37" className="mt-2 size-[37px] self-end" aria-hidden="true">
            <circle cx="18.500" cy="18.500" r="18.500" fill="#a2aab2" /><circle cx="11" cy="10" r="4" fill="#fff" />
          </svg>
          <button type="button" className="mt-7 h-[38px] text-[#d94f4f] underline underline-offset-4">Remove featured image</button>
        </div>
      </section>
      <section className="m-0.5 shrink-0 border-2 border-dotted border-[#555]"><PanelTitle label="Excerpt" open height="h-24" /></section>
    </aside>
  );
}

function Editor() {
  return (
    <div className="flex min-w-0 flex-1 flex-col">
      <EditorHeader />
      <div className="flex min-h-0 flex-1">
        <main className="min-w-0 flex-1 overflow-hidden bg-white">
          <MetaBoxes />
          <OrgChart />
        </main>
        <ScrollBar width="w-[37px]" arrow="my-1 size-7" before="h-[307px]" thumb="h-[227px]" />
        <div className="flex w-[582px] shrink-0">
          <SettingsSidebar />
          <ScrollBar width="w-[35px]" arrow="my-1 size-7" before="h-0" thumb="h-[580px]" />
        </div>
      </div>
    </div>
  );
}

/* Windows taskbar */

function Taskbar() {
  return (
    <footer className="flex h-[60px] shrink-0 items-stretch bg-[#261418] text-white">
      <IconButton label="Start" className="w-[72px]">
        <svg viewBox="0 0 24 24" className="size-6" fill="#fff" aria-hidden="true">
          <path d="M0 3.500L10.300 2v9.400H0zM11.300 1.900L24 0v11.400H11.300zM0 12.500h10.300V22L0 20.500zM11.300 12.500H24V24l-12.700-1.900z" />
        </svg>
      </IconButton>
      <label className="flex w-[516px] items-center border-t border-[#aaa] bg-[#f2f2f2] pr-4 pl-3.5">
        <span className="size-8 shrink-0 rounded-full border-4 border-black" />
        <input aria-label="Search" placeholder="Type here to search" className="ml-3.5 min-w-0 flex-1 bg-transparent text-xl text-[#333] outline-none placeholder:text-[#333]" />
        <Mic className="size-7 text-[#222]" strokeWidth={1.500} />
      </label>
      <IconButton label="Task view" className="w-[77px]">
        <svg viewBox="0 0 26 24" className="h-6 w-[26px]" fill="none" stroke="#fff" strokeWidth="1.500" aria-hidden="true">
          <path d="M2 0v3h14V0M2 7h14v10H2zM2 24v-3h14v3M22 0v5M22 12v12" /><path d="M20.500 7h3v3h-3z" fill="#fff" />
        </svg>
      </IconButton>
      <IconButton label="Microsoft Edge" className="w-[73px] border-r-[6px] border-b-4 border-r-[#3b2b2f] border-b-[#a3cba5] bg-[#554649] pt-1 pl-1.5">
        <FaEdgeLegacy className="size-8 text-[#0078d7]" />
      </IconButton>
      <IconButton label="File Explorer" className="w-[75px]">
        <svg viewBox="0 0 34 28" className="h-7 w-[34px]" aria-hidden="true">
          <path d="M1 1h11l3 3h18v21H1z" fill="#ffe08a" /><path d="M1 1h11l2 4H1z" fill="#ffc825" />
          <path d="M6 14h22v13h-5v-6H11v6H6z" fill="#38aae8" />
        </svg>
      </IconButton>
      <IconButton label="Microsoft Store" className="w-[75px]">
        <svg viewBox="0 0 36 36" className="size-9" aria-hidden="true">
          <path d="M12 12V7c0-7 12-7 12 0v5" fill="none" stroke="#ddd" strokeWidth="2" />
          <path d="M1 10h34v22c0 2-1 3-3 3H4c-2 0-3-1-3-3z" fill="#fff" />
          <path d="M10 15h7v7h-7z" fill="#f25022" /><path d="M19 15h7v7h-7z" fill="#7fba00" />
          <path d="M10 24h7v7h-7z" fill="#00a4ef" /><path d="M19 24h7v7h-7z" fill="#ffb900" />
        </svg>
      </IconButton>
      <IconButton label="Mail" className="w-[75px]">
        <svg viewBox="0 0 36 30" className="h-[30px] w-9" aria-hidden="true">
          <path d="M0 9L18 0l18 9v21H0z" fill="#fff" /><path d="M3 9h31L22 16l7 8-12-8z" fill="#261418" />
        </svg>
      </IconButton>
      <IconButton label="OneNote" className="w-[75px]">
        <svg viewBox="0 0 34 32" className="h-8 w-[34px]" aria-hidden="true">
          <path d="M8 0h26v32H8z" fill="#ca64ea" /><path d="M27 12h7v10h-7z" fill="#9332bf" /><path d="M27 22h7v10h-7z" fill="#7719aa" />
          <path d="M0 7h18v18H0z" fill="#7719aa" /><path d="M6 21V11l6 10V11" fill="none" stroke="#fff" strokeWidth="2" />
        </svg>
      </IconButton>
      <div className="ml-auto flex items-center">
        <IconButton label="People" className="w-12">
          <svg viewBox="0 0 24 24" className="size-6" fill="none" stroke="#fff" strokeWidth="1.800" aria-hidden="true">
            <circle cx="16.500" cy="5" r="4" /><circle cx="7.500" cy="12" r="4" />
            <path d="M1 23c0-9 12-9 12 0M13 12c4-4 9-1 10 3" />
          </svg>
        </IconButton>
        <IconButton label="Show hidden icons" className="ml-3 w-[34px]"><ChevronUp className="size-8" strokeWidth={1.200} /></IconButton>
        <svg viewBox="0 0 24 14" className="ml-2 h-3.5 w-6" fill="none" stroke="#fff" strokeWidth="1.300" aria-hidden="true">
          <path d="M1 1h20v12H1zM23 5v4" /><path d="M3 3h11v8H3z" fill="#fff" stroke="none" />
        </svg>
        <svg viewBox="0 0 20 20" className="ml-4 size-5" fill="none" stroke="#fff" strokeWidth="1.300" aria-hidden="true">
          <path d="M1 19C1 9 9 1 19 1.500M6 19C6 12 12 6 19 6.500M11 19c0-4 4-8 8-7.500" /><circle cx="17" cy="17" r="1.500" fill="#fff" />
        </svg>
        <svg viewBox="0 0 22 20" className="ml-3.5 h-5 w-[22px]" fill="none" stroke="#fff" strokeWidth="1.300" aria-hidden="true">
          <path d="M1 7h4l5-6v18l-5-6H1zM14 6l7 8M21 6l-7 8" />
        </svg>
        <svg viewBox="0 0 34 20" className="ml-4 h-5 w-[34px]" fill="none" stroke="#fff" strokeWidth="1.500" aria-hidden="true">
          <path d="M1 1h32v18H1z" /><path d="M5 5.500h24M5 10h24" strokeDasharray="2 2" /><path d="M5 14.500h3M10 14.500h14M26 14.500h3" />
        </svg>
        <span className="ml-[17px] text-[17px]">ENG</span>
        <div className="ml-4 flex w-24 flex-col text-center text-lg leading-[27px] whitespace-nowrap">
          <span>10:14 AM</span>
          <span>18-05-2019</span>
        </div>
        <IconButton label="Notifications" className="mr-[18px] ml-[26px]">
          <svg viewBox="0 0 36 38" className="h-[38px] w-9" aria-hidden="true">
            <path d="M0 2h24v18H13l-5 5v-5H0z" fill="#fff" /><path d="M4 7h16M4 11h16M4 15h10" stroke="#261418" strokeWidth="1.500" />
            <circle cx="24" cy="25" r="11.500" fill="#2d2d2d" stroke="#777" />
            <text x="24" y="31" textAnchor="middle" fontSize="17" fontWeight="700" fill="#fff">1</text>
          </svg>
        </IconButton>
        <div className="mr-1 h-full w-px bg-[#8a8084]" />
      </div>
    </footer>
  );
}

export default function App() {
  return (
    <div className="flex h-screen flex-col overflow-hidden bg-white font-['Open_Sans',sans-serif]">
      <TabStrip />
      <AddressBar />
      <div className="flex min-h-0 flex-1">
        <div className="flex min-w-0 flex-1 flex-col">
          <AdminBar />
          <div className="flex min-h-0 flex-1">
            <AdminMenu />
            <Editor />
          </div>
        </div>
        <ScrollBar width="w-6" arrow="my-px size-6" before="h-0" thumb="h-[644px]" />
      </div>
      <Taskbar />
    </div>
  );
}
